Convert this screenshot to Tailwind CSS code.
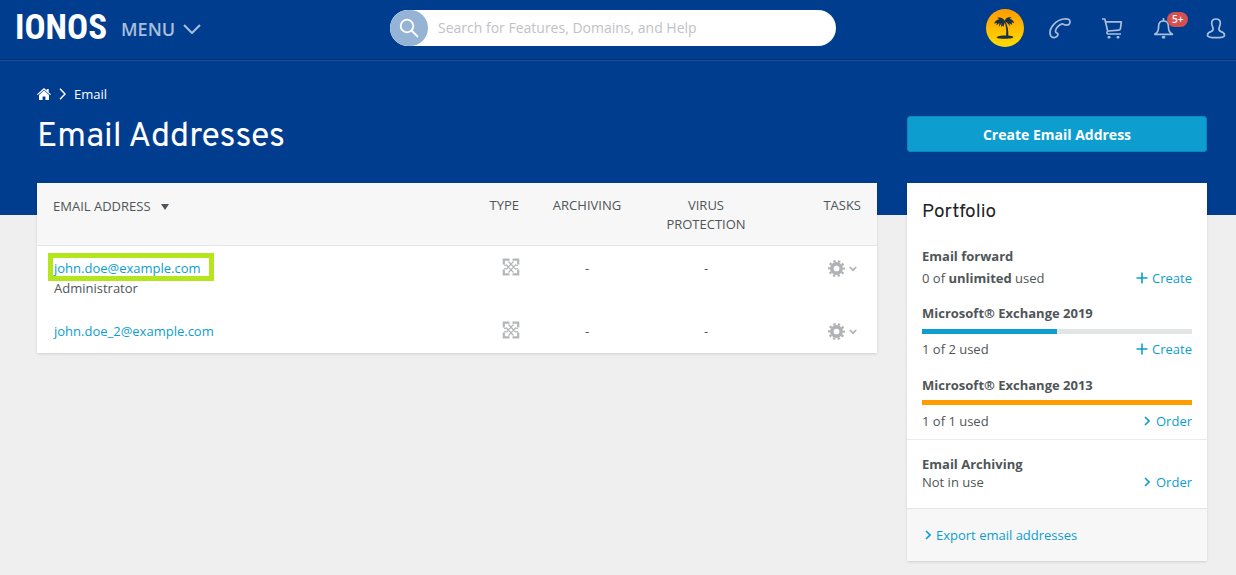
<!DOCTYPE html>
<html lang="en">
<head>
<meta charset="utf-8">
<meta name="viewport" content="width=device-width, initial-scale=1">
<title>Email Addresses</title>
<script src="https://cdn.jsdelivr.net/npm/@tailwindcss/browser@4"></script>
</head>
<body class="min-h-screen bg-[#efefef] font-['Open_Sans','Noto_Sans',sans-serif] text-[13px] leading-5 text-[#4f5558]">
<svg class="hidden" aria-hidden="true">
  <symbol id="exchange" viewBox="0 0 18 18">
    <g fill="none" stroke="currentColor">
      <path d="M7.500 1.700H1.800V6.500M10.500 1.700h5.700V6.500M7.500 16.300H1.800V11.500M10.500 16.300h5.700V11.500" stroke-width="2.200"/>
      <path d="M2 7.500 4.500 7l7 7.500M6.500 3.500l7 7.500 2.500-.5M16 7.500 13.500 7l-7 7.500M11.500 3.500l-7 7.500-2.500-.5" stroke-width="1.200"/>
    </g>
  </symbol>
  <symbol id="gear" viewBox="0 0 16 16">
    <circle cx="8" cy="8" r="4.400" fill="none" stroke="currentColor" stroke-width="3.400"/>
    <circle cx="8" cy="8" r="6.900" fill="none" stroke="currentColor" stroke-width="2.200" stroke-dasharray="2.170 2.170" stroke-dashoffset="1.080"/>
  </symbol>
  <symbol id="small-down" viewBox="0 0 8 6"><path d="m.8 1 3.200 3.200L7.200 1" fill="none" stroke="currentColor" stroke-width="1.700"/></symbol>
  <symbol id="small-right" viewBox="0 0 6 10"><path d="M1 1l4 4-4 4" fill="none" stroke="currentColor" stroke-width="1.600"/></symbol>
  <symbol id="plus" viewBox="0 0 12 12"><path d="M6 .5v11M.5 6h11" fill="none" stroke="currentColor" stroke-width="1.600"/></symbol>
</svg>

<header class="flex h-[60px] items-center border-b border-[#002c70] bg-[#003d8f] pr-2 pb-[3px] pl-[15px] text-[#a9bedb]">
  <div class="flex w-[375px] shrink-0 items-center">
    <a href="#" class="w-[106px] font-['Roboto_Condensed','Open_Sans_Condensed',Overpass,sans-serif] text-[35px] leading-9 font-bold text-white">IONOS</a>
    <button type="button" class="flex items-center gap-2 pt-px font-['Open_Sans',sans-serif] text-lg font-semibold">MENU
      <svg class="h-[10px] w-[18px]" viewBox="0 0 18 10" fill="none" stroke="currentColor" stroke-width="2"><path d="m1 1 8 8 8-8"/></svg>
    </button>
  </div>
  <form class="flex h-9 max-w-[446px] flex-1 items-center overflow-hidden rounded-full bg-white">
    <button type="button" aria-label="Search" class="flex h-9 w-[38px] items-center justify-center rounded-full bg-[#95b3d5] text-white">
      <svg class="size-5" viewBox="0 0 20 20" fill="none" stroke="currentColor" stroke-width="1.800" stroke-linecap="round"><circle cx="8" cy="8" r="6.300"/><path d="m12.500 12.500 6 6"/></svg>
    </button>
    <input type="search" aria-label="Search" placeholder="Search for Features, Domains, and Help" class="min-w-0 flex-1 px-2.5 text-sm outline-none placeholder:text-[#bfc2c4]">
  </form>
  <nav class="ml-auto flex items-center gap-7">
    <a href="#" aria-label="Profile" class="mr-[-4px]">
      <svg class="size-[38px]" viewBox="0 0 38 38">
        <defs><linearGradient id="sun" x1="0" y1="0" x2="0" y2="1"><stop offset="0" stop-color="#ff9b00"/><stop offset="1" stop-color="#ffdc00"/></linearGradient></defs>
        <circle cx="19" cy="19" r="19" fill="url(#sun)"/>
        <g fill="#1b2f45" transform="translate(-3.500 -2.500) scale(1.120)">
          <path d="M19.300 13.500c1.800 3 2.300 8 1.700 13h2c.4-5-.6-10-3-14z"/>
          <path d="M12.500 27.200c2-1.300 5-1.400 8.500-1.400 3.500 0 6.500.4 6.500 1.500 0 1.100-2.500 1.500-7 1.500-5 0-8-.4-8-1.600z"/>
          <path d="M20 13.500c-1-3.200-4.500-4.300-7-3.200 1 .1 1.700.6 2 1.100-2.500.3-4 1.700-4.500 4l2.300-1-.5 2.600 2.800-2.300-.5 3.500c1.600-2.400 3-4 5.400-4.700z"/>
          <path d="M20 13.500c-.2-3 3-4.700 6-3.500-1 .2-1.400.7-1.600 1.200 2.300.3 3.600 1.900 3.800 3.800l-2.200-.9.500 2.500-2.500-1.700.8 3c-1.700-2-2.600-3.700-4.800-4.400z"/>
          <path d="M19.500 12.500c-2 1-3.300 3.200-2.800 5.700l1.300-1.300.8 1.500c.2-2 .8-3.500 1.500-4.900z"/>
        </g>
      </svg>
    </a>
    <a href="#" aria-label="Phone"><svg class="h-6 w-6" viewBox="0 0 24 24" fill="none" stroke="currentColor" stroke-width="1.700" stroke-linejoin="round"><path d="M9 20.300C6.500 22.500 2.500 21.800 2 17.500 1.500 11.500 8 3.800 16 3c4-.4 6 .2 6 3 0 2.200-1.500 3.300-4.300 3-1.900-.2-2.700-1.800-4.700-.8-3 1.700-5.500 5-5.500 7.300 0 1.500 1.300.9 2 1.900.8 1 .3 2.200-.5 2.900z"/></svg></a>
    <a href="#" aria-label="Cart"><svg class="h-6 w-6" viewBox="0 0 24 24" fill="none" stroke="currentColor" stroke-width="1.700" stroke-linejoin="round"><path d="M2 3h2.800l3 12.500M5.500 5.800H21.300l-.8 6.700c-.1 1-.7 1.500-1.700 1.600l-10.500.9c-1.500.2-2 2.700-.3 3H21"/><g fill="currentColor" stroke="none"><rect x="7.500" y="20" width="3" height="2.500" rx="1"/><rect x="16.500" y="20" width="3" height="2.500" rx="1"/></g></svg></a>
    <a href="#" aria-label="Notifications" class="relative"><svg class="h-6 w-6" viewBox="0 0 24 24" fill="none" stroke="currentColor" stroke-width="1.700" stroke-linejoin="round"><path d="M11.500 2v3M2.800 18.300h17.600c-2.900-2-4-3.300-4-8 0-3.500-1.700-5.400-4.900-5.400s-4.900 1.900-4.900 5.400c0 4.700-1 6-3.800 8z"/><rect x="9.800" y="20" width="3.500" height="2.500" rx="1" fill="currentColor" stroke="none"/></svg>
      <span class="absolute -top-1 left-[15px] rounded-full bg-[#d6504f] px-[5px] text-[10px] leading-[15px] font-semibold text-white">5+</span></a>
    <a href="#" aria-label="Account"><svg class="h-6 w-6" viewBox="-2 0 24 24" fill="none" stroke="currentColor" stroke-width="1.700" stroke-linejoin="round"><path d="M10 3C7 3 5.500 4.600 5.700 7.500c.1 2 .8 2.800 1.200 4.200.6 2.200 0 3.300-2 3.900-2.400.7-3.400 1.500-3.400 3.600 0 1.800 3 2.500 8.500 2.500s8.500-.7 8.500-2.500c0-2.100-1-2.900-3.400-3.600-2-.6-2.600-1.700-2-3.900.4-1.400 1.100-2.200 1.200-4.200C14.500 4.600 13 3 10 3z"/></svg></a>
  </nav>
</header>

<section class="border-t border-[#1a5099] bg-[#003d8f] pt-6 pr-[29px] pb-[59px] pl-[37px] text-white">
  <nav aria-label="Breadcrumb" class="flex h-[18px] items-center gap-2">
    <a href="#" aria-label="Home"><svg class="h-3 w-[14px]" viewBox="0 0 14 12" fill="currentColor"><path d="M7 0 0 6.200l.8.900L7 1.700l6.200 5.400.8-.9-2.300-2V1H9.800v1.500zM2 7V12h3.600V8.500h2.800V12H12V7L7 2.400z"/></svg></a>
    <svg class="h-3 w-[7px]" viewBox="0 0 7 12" fill="none" stroke="currentColor" stroke-width="1.500"><path d="m1 .8 5 5.200-5 5.200"/></svg>
    <a href="#">Email</a>
  </nav>
  <div class="mt-3 grid grid-cols-[1fr_300px] items-start gap-[30px]">
    <h1 class="pt-[5px] font-[Overpass,Inter,sans-serif] text-[34px] leading-9">Email Addresses</h1>
    <button type="button" class="mt-px h-9 rounded-[3px] border border-[#0d85bd] bg-[#0d9dcf] pt-px text-sm font-bold">Create Email Address</button>
  </div>
</section>

<main class="-mt-8 grid grid-cols-[1fr_300px] items-start gap-[30px] pr-[29px] pb-3.5 pl-[37px]">
  <table class="w-full table-fixed bg-white shadow-sm">
    <colgroup><col><col class="w-[90px]"><col class="w-[100px]"><col class="w-[138px]"><col class="w-[102px]"></colgroup>
    <thead class="border-b border-[#e3e5e5] bg-[#f7f7f7] leading-[19px]">
      <tr class="h-[62px] align-top">
        <th class="pt-3.5 pl-4 text-left font-normal"><button type="button" class="flex items-center gap-2.5">EMAIL ADDRESS <svg class="h-[6px] w-2" viewBox="0 0 8 6" fill="currentColor"><path d="M0 0h8L4 6z"/></svg></button></th>
        <th class="pt-[13px] pr-[18px] text-right font-normal">TYPE</th>
        <th class="pt-[13px] font-normal">ARCHIVING</th>
        <th class="px-5 pt-[13px] font-normal">VIRUS PROTECTION</th>
        <th class="pt-[13px] pr-4 text-right font-normal">TASKS</th>
      </tr>
    </thead>
    <tbody class="align-top">
      <tr>
        <td class="pt-3 pb-[11px] pl-[17px]">
          <span class="relative block"><a href="#" class="text-[#0d9dcf]">john.doe@example.com</a>
            <span class="pointer-events-none absolute top-[-5px] left-[-6px] h-7 w-[166px] border-5 border-[#b5e61d]"></span></span>
          <span class="block">Administrator</span>
        </td>
        <td class="pt-3 pr-[17px] text-[#b3b7b9]"><svg class="ml-auto size-[18px]"><use href="#exchange"/></svg></td>
        <td class="pt-3 text-center">-</td>
        <td class="pt-3 text-center">-</td>
        <td class="pt-3.5 pr-5 text-[#afb3b6]"><button type="button" aria-label="Tasks" class="ml-auto flex items-center gap-1"><svg class="size-[17px]"><use href="#gear"/></svg><svg class="mt-0.5 h-1.5 w-2"><use href="#small-down"/></svg></button></td>
      </tr>
      <tr>
        <td class="py-3 pl-[17px]"><a href="#" class="text-[#0d9dcf]">john.doe_2@example.com</a></td>
        <td class="pt-3 pr-[17px] text-[#b3b7b9]"><svg class="ml-auto size-[18px]"><use href="#exchange"/></svg></td>
        <td class="pt-3 text-center">-</td>
        <td class="pt-3 text-center">-</td>
        <td class="pt-3.5 pr-5 text-[#afb3b6]"><button type="button" aria-label="Tasks" class="ml-auto flex items-center gap-1"><svg class="size-[17px]"><use href="#gear"/></svg><svg class="mt-0.5 h-1.5 w-2"><use href="#small-down"/></svg></button></td>
      </tr>
    </tbody>
  </table>

  <aside class="bg-white leading-[18px] shadow-sm">
    <div class="px-[15px] pt-[17px] pb-[9px]">
      <h2 class="font-[Overpass,Inter,sans-serif] text-[19px] leading-6 text-[#1d2327]">Portfolio</h2>
      <h3 class="mt-[23px] font-bold">Email forward</h3>
      <div class="mt-1 flex justify-between"><p>0 of <b>unlimited</b> used</p><a href="#" class="flex items-center gap-1 text-[#0d9dcf]"><svg class="size-3"><use href="#plus"/></svg>Create</a></div>
      <h3 class="mt-[17px] font-bold">Microsoft® Exchange 2019</h3>
      <div class="mt-[7px] h-[5px] bg-[#e3e5e5]"><div class="h-full bg-[#0d9dcf]" style="width:50%"></div></div>
      <div class="mt-1.5 flex justify-between"><p>1 of 2 used</p><a href="#" class="flex items-center gap-1 text-[#0d9dcf]"><svg class="size-3"><use href="#plus"/></svg>Create</a></div>
      <h3 class="mt-[18px] font-bold">Microsoft® Exchange 2013</h3>
      <div class="mt-1.5 h-[5px] bg-[#ff9c00]"></div>
      <div class="mt-[7px] flex justify-between"><p>1 of 1 used</p><a href="#" class="flex items-center gap-1.5 text-[#0d9dcf]"><svg class="h-2.5 w-1.5"><use href="#small-right"/></svg>Order</a></div>
    </div>
    <div class="border-t border-[#e9eaea] px-[15px] pt-[15px] pb-[17px]">
      <h3 class="font-bold">Email Archiving</h3>
      <div class="flex justify-between"><p>Not in use</p><a href="#" class="flex items-center gap-1.5 text-[#0d9dcf]"><svg class="h-2.5 w-1.5"><use href="#small-right"/></svg>Order</a></div>
    </div>
    <div class="border-t border-[#e3e5e5] bg-[#f7f7f7] px-[18px] py-[17px]">
      <a href="#" class="flex items-center gap-[5px] text-[#0d9dcf]"><svg class="h-2.5 w-1.5"><use href="#small-right"/></svg>Export email addresses</a>
    </div>
  </aside>
</main>
</body>
</html>
